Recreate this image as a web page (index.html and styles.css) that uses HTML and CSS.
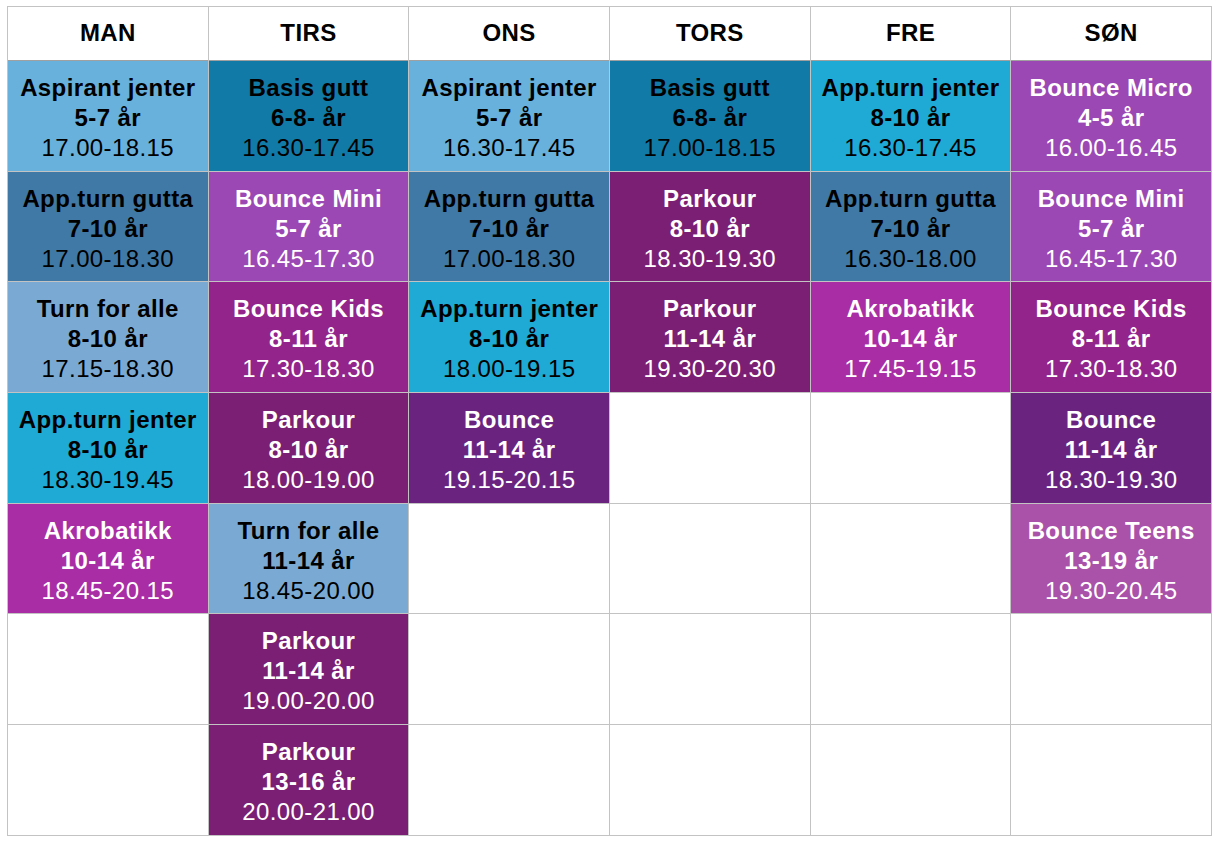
FILE: index.html
```html
<!DOCTYPE html>
<html lang="no">
<head>
<meta charset="utf-8">
<title>Timeplan</title>
<link rel="stylesheet" href="styles.css">
</head>
<body>
<div class="schedule">
  <div class="head">MAN</div>
  <div class="head">TIRS</div>
  <div class="head">ONS</div>
  <div class="head">TORS</div>
  <div class="head">FRE</div>
  <div class="head">SØN</div>

  <div class="cell aspirant"><b>Aspirant jenter</b><b>5-7 år</b><span>17.00-18.15</span></div>
  <div class="cell basis"><b>Basis gutt</b><b>6-8- år</b><span>16.30-17.45</span></div>
  <div class="cell aspirant"><b>Aspirant jenter</b><b>5-7 år</b><span>16.30-17.45</span></div>
  <div class="cell basis"><b>Basis gutt</b><b>6-8- år</b><span>17.00-18.15</span></div>
  <div class="cell jenter"><b>App.turn jenter</b><b>8-10 år</b><span>16.30-17.45</span></div>
  <div class="cell micro"><b>Bounce Micro</b><b>4-5 år</b><span>16.00-16.45</span></div>

  <div class="cell gutta"><b>App.turn gutta</b><b>7-10 år</b><span>17.00-18.30</span></div>
  <div class="cell mini"><b>Bounce Mini</b><b>5-7 år</b><span>16.45-17.30</span></div>
  <div class="cell gutta"><b>App.turn gutta</b><b>7-10 år</b><span>17.00-18.30</span></div>
  <div class="cell parkour"><b>Parkour</b><b>8-10 år</b><span>18.30-19.30</span></div>
  <div class="cell gutta"><b>App.turn gutta</b><b>7-10 år</b><span>16.30-18.00</span></div>
  <div class="cell mini"><b>Bounce Mini</b><b>5-7 år</b><span>16.45-17.30</span></div>

  <div class="cell alle"><b>Turn for alle</b><b>8-10 år</b><span>17.15-18.30</span></div>
  <div class="cell kids"><b>Bounce Kids</b><b>8-11 år</b><span>17.30-18.30</span></div>
  <div class="cell jenter"><b>App.turn jenter</b><b>8-10 år</b><span>18.00-19.15</span></div>
  <div class="cell parkour"><b>Parkour</b><b>11-14 år</b><span>19.30-20.30</span></div>
  <div class="cell akro"><b>Akrobatikk</b><b>10-14 år</b><span>17.45-19.15</span></div>
  <div class="cell kids"><b>Bounce Kids</b><b>8-11 år</b><span>17.30-18.30</span></div>

  <div class="cell jenter"><b>App.turn jenter</b><b>8-10 år</b><span>18.30-19.45</span></div>
  <div class="cell parkour"><b>Parkour</b><b>8-10 år</b><span>18.00-19.00</span></div>
  <div class="cell bounce"><b>Bounce</b><b>11-14 år</b><span>19.15-20.15</span></div>
  <div class="cell"></div>
  <div class="cell"></div>
  <div class="cell bounce"><b>Bounce</b><b>11-14 år</b><span>18.30-19.30</span></div>

  <div class="cell akro"><b>Akrobatikk</b><b>10-14 år</b><span>18.45-20.15</span></div>
  <div class="cell alle"><b>Turn for alle</b><b>11-14 år</b><span>18.45-20.00</span></div>
  <div class="cell"></div>
  <div class="cell"></div>
  <div class="cell"></div>
  <div class="cell teens"><b>Bounce Teens</b><b>13-19 år</b><span>19.30-20.45</span></div>

  <div class="cell"></div>
  <div class="cell parkour"><b>Parkour</b><b>11-14 år</b><span>19.00-20.00</span></div>
  <div class="cell"></div>
  <div class="cell"></div>
  <div class="cell"></div>
  <div class="cell"></div>

  <div class="cell"></div>
  <div class="cell parkour"><b>Parkour</b><b>13-16 år</b><span>20.00-21.00</span></div>
  <div class="cell"></div>
  <div class="cell"></div>
  <div class="cell"></div>
  <div class="cell"></div>
</div>
</body>
</html>
```

FILE: styles.css
```css
html, body {
  margin: 0;
  padding: 0;
  background: #ffffff;
}

body {
  padding: 6px 0 0 7px;
  font-family: "Liberation Sans", Arial, Helvetica, sans-serif;
}

.schedule {
  display: grid;
  grid-template-columns: repeat(6, 1fr);
  grid-template-rows: 53px repeat(7, 109.7px);
  gap: 1px;
  padding: 1px;
  width: 1203px;
  background: #c3c3c3;
}

.head {
  background: #ffffff;
  color: #000000;
  font-weight: bold;
  font-size: 24px;
  letter-spacing: 0.4px;
  display: flex;
  align-items: center;
  justify-content: center;
  padding-bottom: 1px;
  box-shadow: 0 1px 0 #a0a0a0;
}

.cell {
  background: #ffffff;
  color: #000000;
  font-size: 24px;
  line-height: 30px;
  letter-spacing: 0.4px;
  display: flex;
  flex-direction: column;
  align-items: center;
  justify-content: center;
  text-align: center;
  padding-top: 4px;
  box-sizing: border-box;
}

.cell b {
  font-weight: bold;
}

.cell span {
  font-weight: normal;
}

.aspirant { background: #68b1dc; }
.basis { background: #127aa7; }
.jenter { background: #1eaad5; }
.gutta { background: #4079a6; }
.alle { background: #7aaad4; }

.micro, .mini, .kids, .parkour, .akro, .bounce, .teens { color: #ffffff; }
.micro { background: #9b47b4; }
.mini { background: #9b48b4; }
.kids { background: #92248b; }
.parkour { background: #7a1f74; }
.akro { background: #a92da4; }
.bounce { background: #6a2480; }
.teens { background: #aa51a9; }
```
